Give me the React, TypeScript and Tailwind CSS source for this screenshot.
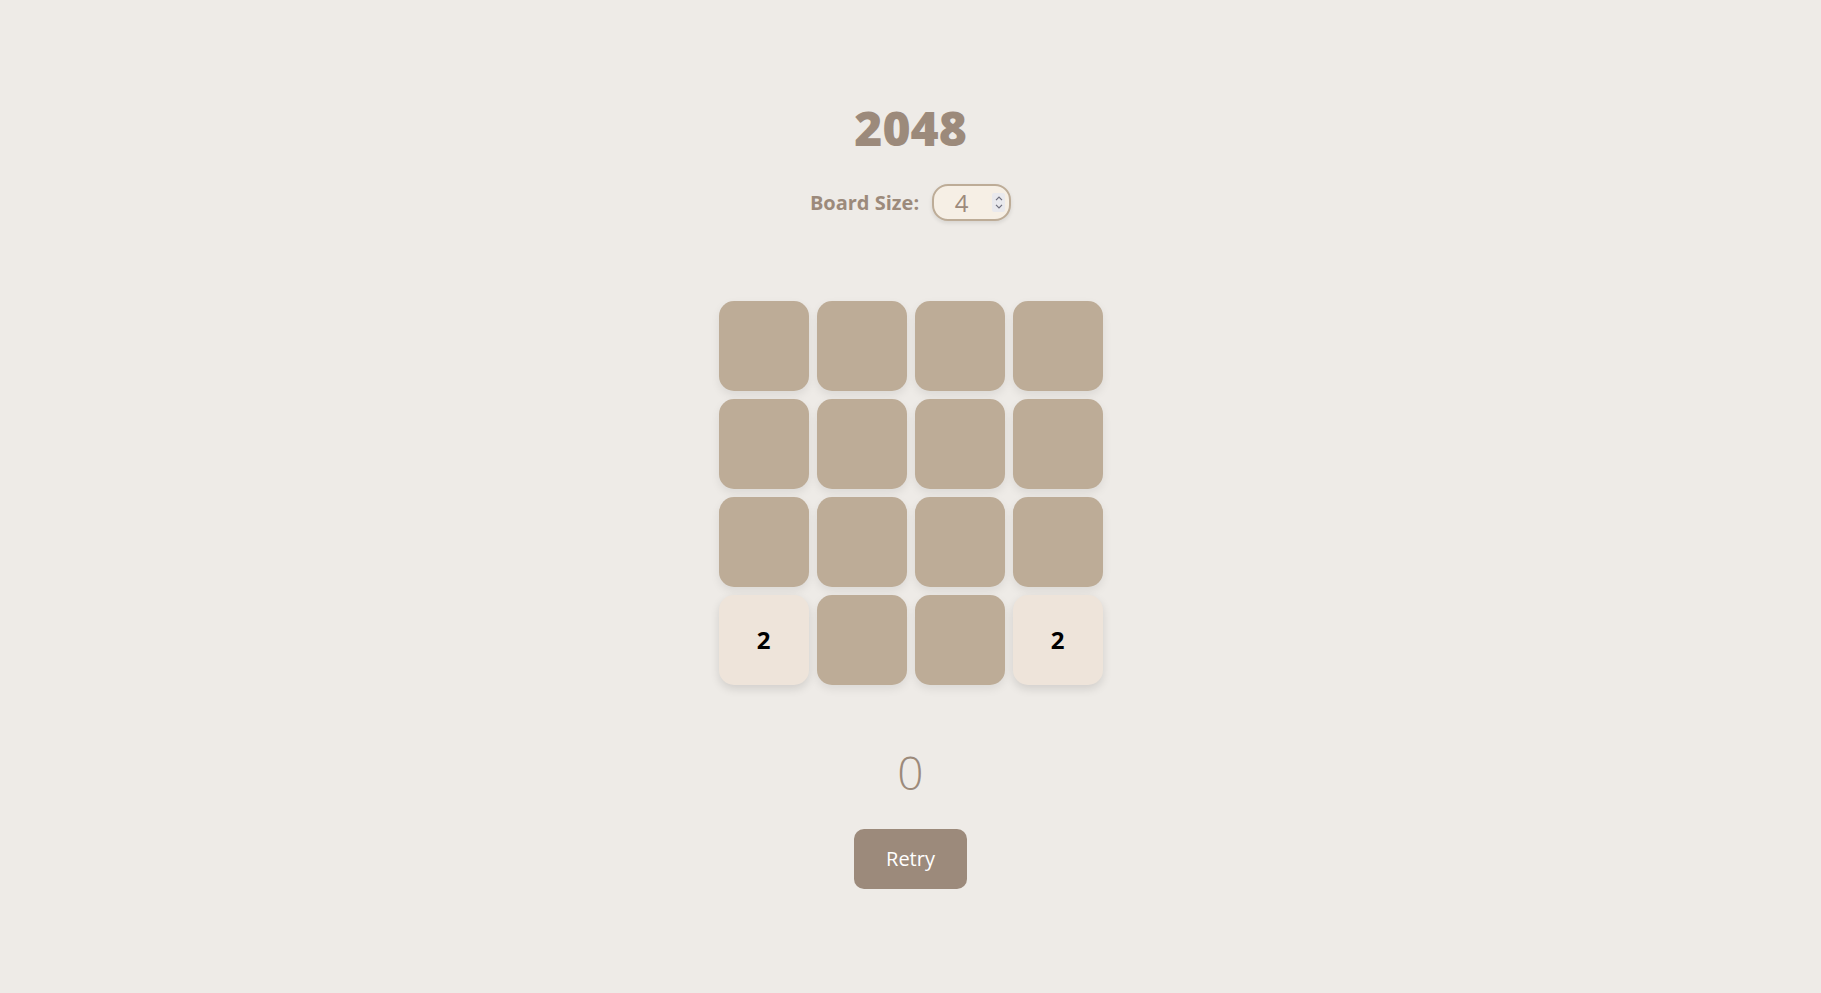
import { useState } from 'react'

export default function App() {
  const [size, setSize] = useState(4)
  const board = [
    [0, 0, 0, 0],
    [0, 0, 0, 0],
    [0, 0, 0, 0],
    [2, 0, 0, 2],
  ]

  return (
    <div className="min-h-screen bg-[#eeebe7] flex flex-col items-center font-['Open_Sans',sans-serif]">
      {/* Title */}
      <h1 className="mt-[104px] text-[48px] leading-[48px] font-extrabold text-[#9c8a7b]">2048</h1>

      {/* Board size */}
      <div className="mt-[32px] flex items-center gap-[13px]">
        <label className="text-[20px] font-bold text-[#9c8a7b]">Board Size:</label>
        <div className="relative">
          <input
            type="number"
            value={size}
            onChange={(e) => setSize(Number(e.target.value))}
            className="block w-[79px] h-[37px] rounded-[16px] border-2 border-[#bdac97] bg-[#f6efe5] text-center text-[24px] leading-[24px] text-[#9c8a7b] pl-[4px] pr-[24px] shadow-[0_2px_4px_rgba(0,0,0,0.1)] outline-none [appearance:textfield] [&::-webkit-inner-spin-button]:appearance-none [&::-webkit-outer-spin-button]:appearance-none"
          />
          {/* spinner */}
          <div className="absolute right-[6px] top-[9px] w-[13px] h-[19px] bg-[#e9e9ed] rounded-[2px] flex flex-col items-center justify-center gap-[3px] pointer-events-none">
            <svg width="8" height="5" viewBox="0 0 8 5" fill="none" stroke="#6f6f7d" strokeWidth="1.2">
              <path d="M1 4.2 L4 1.2 L7 4.2" />
            </svg>
            <svg width="8" height="5" viewBox="0 0 8 5" fill="none" stroke="#6f6f7d" strokeWidth="1.2">
              <path d="M1 0.8 L4 3.8 L7 0.8" />
            </svg>
          </div>
        </div>
      </div>

      {/* Grid */}
      <div className="mt-[80px] grid grid-cols-4 gap-[8px]">
        {board.flat().map((value, i) => (
          <div
            key={i}
            className={
              value
                ? 'w-[90px] h-[90px] rounded-[15px] bg-[#eee4da] flex items-center justify-center text-[24px] font-bold text-black shadow-[0_4px_10px_rgba(0,0,0,0.12)]'
                : 'w-[90px] h-[90px] rounded-[15px] bg-[#bdac97] shadow-[0_4px_10px_rgba(0,0,0,0.08)]'
            }
          >
            {value ? value : ''}
          </div>
        ))}
      </div>

      {/* Score */}
      <div className="mt-[64px] text-[46px] leading-[46px] font-light text-[#9c8a7b]">0</div>

      <button className="mt-[34px] w-[113px] h-[60px] rounded-[10px] bg-[#9c8a7b] text-white text-[20px]">
        Retry
      </button>
    </div>
  )
}
